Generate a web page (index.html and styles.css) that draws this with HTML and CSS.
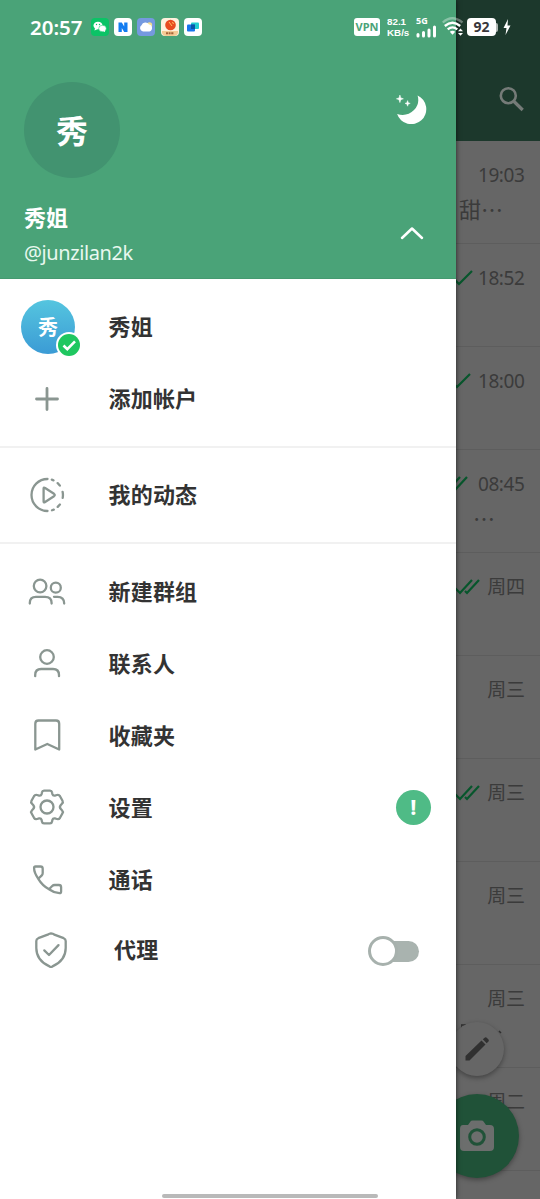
FILE: index.html
```html
<!DOCTYPE html>
<html lang="zh-CN">
<head>
<meta charset="utf-8">
<title>菜单</title>
<link rel="stylesheet" href="styles.css">
</head>
<body>
<div class="screen">
  <aside class="drawer">
    <header class="profile">
      <div class="profile-top">
        <div class="avatar">秀</div>
        <svg class="moon" width="48" height="48" viewBox="-24 -24 48 48"><path d="M6.600-12.500A15 15 0 1 1-13.900 6Q-4 9 3 2Q9-4 6.600-12.500Z" fill="#fff"/><path d="M-11.100-13L-10.200-10.100-7.600-9.200-10.200-8.300-11.100-5.400-12-8.300-14.600-9.200-12-10.100ZM-3.400-7.400L-2.700-5.300-.8-4.600-2.700-3.900-3.400-1.800-4.100-3.900-6-4.600-4.100-5.300Z" fill="#fff" stroke="#fff" stroke-width=".5"/></svg>
      </div>
      <div class="profile-bottom">
        <div>
          <div class="name">秀姐</div>
          <div class="handle">@junzilan2k</div>
        </div>
        <svg class="chevron" width="28" height="20" viewBox="-14 -10 28 20"><path d="M-10 5L0-4.500 10 5"/></svg>
      </div>
    </header>
    <nav>
      <section class="group">
        <div class="item">
          <div class="mini"><span class="mini-avatar">秀</span><svg class="tick" width="26" height="26" viewBox="-13 -13 26 26"><circle r="13" fill="#fff"/><circle r="11" fill="#1fc760"/><path d="M-5.500.5L-1.700 4.200 6-3.600" fill="none" stroke="#fff" stroke-width="2.600"/></svg></div>
          <span>秀姐</span>
        </div>
        <div class="item"><svg class="icon plus" viewBox="-24 -24 48 48"><path d="M-10.500 0H10.500M0-10.500V10.500"/></svg><span>添加帐户</span></div>
      </section>
      <section class="group">
        <div class="item"><svg class="icon" viewBox="-24 -24 48 48"><path d="M.5-16A16 16 0 0 0 .5 16"/><path d="M4.800-15.300L6.500-14.700M10.600-11.900L12.800-9.400M15.600-3.200A16 16 0 0 1 15.700 2.900M12.900 9.500L10.700 11.900M6.800 14.600L5 15.300"/><path d="M-3.400-6.400V6.400Q-3.400 8-1.900 7L7 1.200Q8.500 0 7-1.200L-1.900-7Q-3.400-8-3.400-6.400Z"/></svg><span>我的动态</span></div>
      </section>
      <section class="group">
        <div class="item"><svg class="icon" viewBox="-24 -24 48 48"><circle cx="-6.900" cy="-6" r="6.300"/><circle cx="8.800" cy="-4.300" r="5"/><path d="M-17.200 11.500V11Q-17.200 4.800-11 4.800H-2Q4.600 4.800 4.600 11V11.500M7 4.800H10.500Q17.200 4.800 17.200 11.500"/></svg><span>新建群组</span></div>
        <div class="item"><svg class="icon" viewBox="-24 -24 48 48"><circle cy="-7" r="6.800"/><path d="M-11.800 12.200V11Q-11.800 5-5.800 5H6Q12 5 12 11V12.200"/></svg><span>联系人</span></div>
        <div class="item"><svg class="icon" viewBox="-24 -24 48 48"><path d="M-8.500-15.500H9Q12.200-15.500 12.200-12.300V13.500L.3 8-11.700 13.500V-12.300Q-11.700-15.500-8.500-15.500Z"/></svg><span>收藏夹</span></div>
        <div class="item"><svg class="icon" viewBox="-24 -23 48 48"><circle r="6.500"/><path d="M-3-16.300H3Q4.700-16.300 5-14.700L5.400-12.900Q6-11 7.900-11.400L9.900-12Q12-12.500 13-10.800L15.500-6.300Q16.400-4.600 15-3.300L13.800-2Q12 0 13.800 2L15 3.300Q16.400 4.600 15.500 6.300L13 10.800Q12 12.500 9.900 12L7.900 11.400Q6 11 5.400 12.900L5 14.700Q4.700 16.300 3 16.300H-3Q-4.700 16.300-5 14.700L-5.400 12.900Q-6 11-7.900 11.400L-9.900 12Q-12 12.500-13 10.800L-15.500 6.300Q-16.400 4.600-15 3.300L-13.800 2Q-12 0-13.800-2L-15-3.300Q-16.400-4.600-15.500-6.300L-13-10.800Q-12-12.500-9.900-12L-7.900-11.400Q-6-11-5.400-12.900L-5-14.700Q-4.700-16.300-3-16.300Z"/></svg><span>设置</span><b class="alert">!</b></div>
        <div class="item"><svg class="icon" viewBox="-24 -24 48 48"><path d="M-11.500-13.500H-6.500Q-4.300-13.500-4.300-11.300V-7Q-4.300-5.500-5.200-4.600L-8.700-1.200Q-13-7.500-12.900-12Q-12.900-13.500-11.500-13.500ZM-8.700-1.200Q-4.700 5.500 2 9.200M2 9.200L5.200 6Q6.200 5 7.700 5H11.900Q14.100 5 14.100 7.200V11.500Q14.100 13.200 12.400 13.200Q7 12.800 2 9.200Z"/></svg><span>通话</span></div>
        <div class="item proxy"><svg class="icon" viewBox="-24 -24 48 48"><path d="M0-16.600Q2 -16.400 3.300-15.300L12.700-11.800Q14.700-11 14.700-8.900V-2C14.700 8 8 13.500 1.500 16.400Q0 17.200-1.500 16.400C-8 13.500-14.700 8-14.700-2V-8.900Q-14.700-11-12.700-11.800L-3.300-15.300Q-1.500-16.400 0-16.600ZM-6.700.4L-2 5 7.500-4.900"/></svg><span>代理</span><i class="switch"><i class="thumb"></i></i></div>
      </section>
    </nav>
  </aside>
  <main class="chats">
    <div class="bar"><svg width="32" height="32" viewBox="0 0 32 32" fill="none" stroke="#757b78" stroke-width="2.600"><circle cx="13.300" cy="12.700" r="7.500"/><path d="M18.500 18L27.700 27" stroke-width="3.200"/></svg></div>
    <div class="chat"><time>19:03</time><p class="sweet">甜…</p></div>
    <div class="chat"><svg class="checks" viewBox="0 0 28 18"><path d="M0 10L5 15 18 2"/></svg><time>18:52</time></div>
    <div class="chat"><svg class="checks" viewBox="0 0 28 18"><path d="M-2 10L3 15 16 2"/></svg><time>18:00</time></div>
    <div class="chat"><svg class="checks shifted" viewBox="0 0 28 18"><path d="M1 10L6 15 18 2M11 17L25 2"/></svg><time>08:45</time><p class="dots">…</p></div>
    <div class="chat"><svg class="checks" viewBox="0 0 28 18"><path d="M1 10L6 15 18 2M11 13L13 15 25 2"/></svg><time>周四</time></div>
    <div class="chat"><time>周三</time></div>
    <div class="chat"><svg class="checks" viewBox="0 0 28 18"><path d="M1 10L6 15 18 2M11 13L13 15 25 2"/></svg><time>周三</time></div>
    <div class="chat"><time>周三</time></div>
    <div class="chat"><time>周三</time></div>
    <div class="chat"><time>周二</time></div>
    <svg class="remnant" width="42" height="12" viewBox="0 0 42 12"><path d="M0 2H5M0 2V5M38 8L40 10" fill="none" stroke="#303030" stroke-width="1.500"/></svg>
    <div class="fab pen"><svg width="28" height="28" viewBox="-14 -14 28 28" fill="#303030"><path d="M-11.500 7L4.500-8.500 8.500-4.500-7.500 11.500H-11.500ZM5.800-9.700L8-11.500Q9-12 10-11L11.500-9.500Q12.300-8.500 11.500-7.500L9.700-5.700Z"/></svg></div>
    <div class="fab camera"><svg width="36" height="34" viewBox="-18 -17 36 34"><path d="M-14-11H-9L-6.500-14.500Q-6-15.500-4.500-15.500H4.500Q6-15.500 6.500-14.500L9-11H13Q17-11 17-7V11Q17 15 13 15H-13Q-17 15-17 11V-7Q-17-11-14-11Z" fill="#6c6e6d"/><circle cy="1" r="7.300" fill="none" stroke="#205238" stroke-width="3"/></svg></div>
  </main>
  <div class="status">
    <div class="status-left">
      <span class="clock">20:57</span>
      <svg class="app" viewBox="0 0 18 18"><rect width="18" height="18" rx="4" fill="#0bc366"/><ellipse cx="7" cy="7.500" rx="4.500" ry="3.800" fill="#fff"/><path d="M4 10L3.500 12.500 7 11" fill="#fff"/><ellipse cx="11.500" cy="10.500" rx="3.800" ry="3.200" fill="#fff" stroke="#0bc366" stroke-width=".5"/><path d="M12 13L14 14 14 12" fill="#fff"/><circle cx="5.500" cy="6.500" r=".7" fill="#0bc366"/><circle cx="8.500" cy="6.500" r=".7" fill="#0bc366"/></svg>
      <svg class="app" viewBox="0 0 18 18"><rect width="18" height="18" rx="4" fill="#fff"/><path d="M4.500 14V4.500H7.800L10.200 8.500V4.500H13.500V14H10.200L7.800 10V14Z" fill="#137cf0"/></svg>
      <svg class="app" viewBox="0 0 18 18"><rect width="18" height="18" rx="4" fill="#7599df"/><circle cx="12.500" cy="7" r="2.700" fill="#f1dd90"/><path d="M6 13.500A3.500 3.500 0 0 1 4.500 7.200A4.200 4.200 0 0 1 12 6.500A3.600 3.600 0 0 1 12.500 13.500Z" fill="#fff"/></svg>
      <svg class="app" viewBox="0 0 18 18"><rect width="18" height="18" rx="4" fill="#fff1dd"/><circle cx="9.500" cy="7" r="5.300" fill="#e84c20"/><path d="M8 4L11 8M11.500 4L12.500 6" stroke="#ffc05b"/><path d="M1 13H17V15Q16 18 13 18H5Q2 18 1 15Z" fill="#f4ca94"/><path d="M5 15.300H13" stroke="#a46438" stroke-width="2" stroke-dasharray="2 .6"/></svg>
      <svg class="app" viewBox="0 0 18 18"><rect width="18" height="18" rx="4" fill="#fff"/><rect x="7" y="4.500" width="8" height="6.500" rx="1" fill="#22ccd0"/><rect x="3" y="6.500" width="8" height="7" rx="1" fill="#1675ed"/><rect x="7" y="6.500" width="4" height="4.500" fill="#0755aa"/></svg>
    </div>
    <div class="status-right">
      <span class="vpn">VPN</span>
      <span class="speed"><span>82.1</span><span>KB/s</span></span>
      <span class="signal"><span>5G</span><svg width="21" height="13" viewBox="0 0 21 13"><path d="M2 11V9.500M7.500 11V7.500M13 11V5M18.500 11V2" stroke="#fff" stroke-width="3" stroke-linecap="round"/></svg></span>
      <svg class="wifi" width="22" height="20" viewBox="0 0 22 20" fill="none" stroke="#fff" stroke-width="2.300"><path d="M.8 5.500Q10-3 20.500 5.500" stroke-opacity=".35"/><path d="M2.800 9Q10.500 2.500 18.200 9M5.700 12.300Q10.500 8.500 15.300 12.300"/><path d="M7.800 14.800Q10.500 12.700 13.200 14.800L10.500 17.800Z" fill="#fff" stroke="none"/><path d="M16 14.300L18.500 11.500 21 14.300ZM16 16L18.500 18.800 21 16Z" fill="#fff" stroke="none"/></svg>
      <span class="battery">92</span>
      <svg class="bolt" width="8" height="18" viewBox="0 0 8 18"><path d="M5 1L.5 10H3.500L2.500 17 7.500 7.500H4.500Z" fill="#fff"/></svg>
    </div>
  </div>
  <div class="home-bar"></div>
</div>
</body>
</html>
```
FILE: styles.css
```css
* { box-sizing: border-box; }
body { margin: 0; font-family: "Noto Sans", "Noto Sans CJK SC", sans-serif; }
svg { display: block; flex: none; }
.screen { position: relative; display: flex; width: 540px; height: 1199px; overflow: hidden; background: #666; }
.drawer { position: relative; z-index: 1; width: 456px; height: 1199px; background: #fff; box-shadow: 0 0 5px rgba(0,0,0,.65); }
.profile { height: 279px; padding: 82px 24px 0; background: #4aa378; color: #fff; border-bottom: 1px solid #459a70; }
.profile-top { display: flex; justify-content: space-between; height: 96px; }
.avatar { width: 96px; height: 96px; border-radius: 50%; background: #429370; font: 700 32px/94px "Noto Sans CJK SC", sans-serif; text-align: center; }
.moon { margin: 2px -3px 0 0; }
.profile-bottom { display: flex; justify-content: space-between; padding-top: 20px; }
.name { font: 700 22px/36px "Noto Sans CJK SC", sans-serif; }
.handle { padding-top: 2px; font-size: 20px; line-height: 34px; letter-spacing: -.4px; color: #e8f8ef; }
.chevron { margin: 25px 6.500px 0 0; fill: none; stroke: #fff; stroke-width: 2.500; stroke-linecap: round; stroke-linejoin: round; }
.group { padding: 12px 0 11px; border-bottom: 2px solid #f1f1f1; }
.group + .group { padding: 11px 0; }
.group:last-child { padding: 12px 0; border: 0; }
.item { display: flex; align-items: center; height: 72px; padding: 0 25px 0 22.500px; color: #333; font: 700 22px/32px "Noto Sans CJK SC", sans-serif; letter-spacing: .2px; }
.item > span { padding-bottom: 4px; }
.icon { width: 48px; height: 48px; margin-right: 38px; fill: none; stroke: #8a9691; stroke-width: 2.300; stroke-linecap: round; stroke-linejoin: round; }
.plus { stroke-width: 2.800; }
.mini { position: relative; width: 54px; height: 54px; margin: 0 33.500px 0 -1.500px; }
.mini-avatar { display: block; width: 54px; height: 54px; border-radius: 50%; background: linear-gradient(#55c5df, #3b9bd5); color: #fff; font-size: 20px; line-height: 53px; text-align: center; }
.tick { position: absolute; left: 35px; top: 32px; }
.alert { width: 35px; height: 35px; margin: -1px 0 0 auto; border-radius: 50%; background: #4fbb86; color: #fff; font: 700 22px/33px "Noto Sans", sans-serif; text-align: center; }
.proxy { height: 68px; padding-left: 27px; padding-right: 37px; }
.proxy .icon { margin-right: 39px; }
.switch { display: flex; align-items: center; width: 37px; height: 21px; margin: 2px 0 0 auto; border-radius: 0 11px 11px 0; background: #a9b3af; }
.thumb { flex: none; width: 30px; height: 30px; margin-left: -14px; border: 3px solid #a7b1ad; border-radius: 50%; background: #fff; }
.chats { position: relative; width: 84px; height: 1199px; overflow: hidden; }
.bar { height: 141px; padding: 83px 0 0 39px; background: #1c382c; }
.chat { display: grid; grid-template-columns: minmax(0, 1fr) auto; grid-template-rows: 36px 34px; height: 103px; padding: 16px 15.500px 0 0; border-bottom: 1px solid #5d5d5d; color: #3b3b3b; }
time { grid-column: 2; font: 400 19px/36px "Noto Sans", "Noto Sans CJK SC", sans-serif; letter-spacing: -.4px; text-align: right; }
.chat p { grid-column: 1 / 3; margin: 0; padding-left: 3px; font: 400 22px/30px "Noto Sans CJK SC", sans-serif; }
.chat .dots { padding-left: 17px; }
.checks { grid-row: 1; grid-column: 1; width: 28px; height: 18px; margin: 9px 0 0 -2px; fill: none; stroke: #07562c; stroke-width: 2.200; }
.shifted { margin-left: -14px; }
.remnant { position: absolute; left: 5px; top: 1023px; }
.fab { position: absolute; display: flex; align-items: center; justify-content: center; border-radius: 50%; box-shadow: 0 2px 5px rgba(0,0,0,.35); }
.pen { left: -6px; top: 1022px; width: 54px; height: 54px; background: #666; }
.camera { left: -21px; top: 1094px; width: 84px; height: 84px; background: #205238; }
.status { position: absolute; z-index: 2; left: 0; top: 0; width: 540px; height: 54px; display: flex; justify-content: space-between; align-items: center; padding: 0 29px; color: #fff; }
.status-left { display: flex; align-items: center; gap: 5.300px; }
.clock { width: 56.500px; padding: 0 0 0 1px; font: 600 20.500px/28px "Noto Sans", sans-serif; }
.app { width: 18px; height: 18px; }
.status-right { display: flex; align-items: center; }
.vpn { width: 26px; height: 18px; margin-right: 7px; border-radius: 3px; background: #fff; color: #4aa378; font: 700 11px/18px "Noto Sans", sans-serif; text-align: center; }
.speed { display: flex; flex-direction: column; gap: 0; width: 24px; margin-right: 5px; font: 700 9.800px/11px "Liberation Sans", sans-serif; white-space: nowrap; }
.speed span { height: 11px; overflow: hidden; }
.signal { width: 22px; margin-right: 4px; font: 700 9px/8px "Noto Sans", sans-serif; }
.battery { position: relative; width: 29px; height: 18px; margin: 0 7px 0 3px; border-radius: 4px; background: #fff; color: #39373b; font: 700 14px/18px "Noto Sans", sans-serif; text-align: center; }
.battery::after { content: ""; position: absolute; left: 29px; top: 5px; width: 2px; height: 9px; border-radius: 0 2px 2px 0; background: #b2bab6; }
.home-bar { position: absolute; z-index: 3; left: 162px; top: 1194px; width: 216px; height: 4px; border-radius: 2px; background: #b9b9b9; }
```
